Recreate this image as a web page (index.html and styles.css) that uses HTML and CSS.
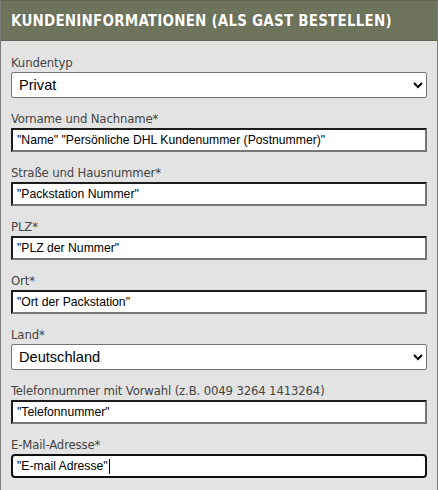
FILE: index.html
```html
<!DOCTYPE html>
<html lang="de">
<head>
<meta charset="utf-8">
<title>Kundeninformationen</title>
<link rel="stylesheet" href="styles.css">
</head>
<body>
<div class="panel">
  <div class="panel-head">Kundeninformationen (als Gast bestellen)</div>
  <div class="panel-body">
    <div class="field">
      <label class="lbl">Kundentyp</label>
      <select class="sel"><option>Privat</option></select>
    </div>
    <div class="field">
      <label class="lbl">Vorname und Nachname*</label>
      <input class="inp" type="text" value="&quot;Name&quot; &quot;Persönliche DHL Kundenummer (Postnummer)&quot;">
    </div>
    <div class="field">
      <label class="lbl">Straße und Hausnummer*</label>
      <input class="inp" type="text" value="&quot;Packstation Nummer&quot;">
    </div>
    <div class="field">
      <label class="lbl">PLZ*</label>
      <input class="inp" type="text" value="&quot;PLZ der Nummer&quot;">
    </div>
    <div class="field">
      <label class="lbl">Ort*</label>
      <input class="inp" type="text" value="&quot;Ort der Packstation&quot;">
    </div>
    <div class="field">
      <label class="lbl">Land*</label>
      <select class="sel"><option>Deutschland</option></select>
    </div>
    <div class="field">
      <label class="lbl">Telefonnummer mit Vorwahl (z.B. 0049 3264 1413264)</label>
      <input class="inp" type="text" value="&quot;Telefonnummer&quot;">
    </div>
    <div class="field">
      <label class="lbl">E-Mail-Adresse*</label>
      <div class="inp focused">"E-mail Adresse"<span class="caret"></span></div>
    </div>
  </div>
</div>
</body>
</html>
```
FILE: styles.css
```css
html, body {
  margin: 0;
  padding: 0;
  background: #e3e3e3;
}
.panel {
  width: 436px;
  border-left: 1px solid #7c7c7c;
  border-right: 1px solid #7c7c7c;
  background: #e3e3e3;
  min-height: 490px;
}
.panel-head {
  height: 41px;
  box-sizing: border-box;
  padding: 0 10px;
  background: #6e735c;
  border-top: 1px solid #5f6350;
  border-bottom: 1px solid #5f6350;
  color: #ffffff;
  font-family: "DejaVu Sans Condensed", "DejaVu Sans", Verdana, sans-serif;
  font-weight: bold;
  font-size: 15px;
  letter-spacing: 0.2px;
  text-transform: uppercase;
  display: flex;
  align-items: center;
  text-shadow: 0 0 1px rgba(0,0,0,0.3);
}
.panel-body {
  padding: 14px 10px 0 10px;
}
.field {
  display: flex;
  flex-direction: column;
  margin-bottom: 13px;
}
.lbl {
  font-family: "DejaVu Sans Condensed", "DejaVu Sans", sans-serif;
  font-size: 13px;
  line-height: 16px;
  letter-spacing: -0.15px;
  color: #454545;
  margin-bottom: 1px;
}
.sel {
  height: 26px;
  width: 100%;
  box-sizing: border-box;
  margin: 0;
  padding: 0 0 0 3px;
  border: 1px solid #767676;
  border-radius: 2px;
  background: #fff;
  font-family: "Liberation Sans", Arial, sans-serif;
  font-size: 14.6px;
  color: #000;
}
.inp {
  height: 24px;
  width: 100%;
  box-sizing: border-box;
  margin: 0;
  padding: 0 3px 0 4px;
  border-style: solid;
  border-width: 2px;
  border-color: #1c1c1c #767676 #767676 #1c1c1c;
  background: #fff;
  font-family: "Liberation Sans", Arial, sans-serif;
  font-size: 12.2px;
  color: #000;
  outline: none;
}
.focused {
  display: flex;
  align-items: center;
  border-color: #101010;
  border-radius: 4px;
  padding-left: 4px;
  line-height: 16px;
}
.caret {
  display: inline-block;
  width: 1px;
  height: 15px;
  background: #000;
  margin-left: 1px;
}
```
